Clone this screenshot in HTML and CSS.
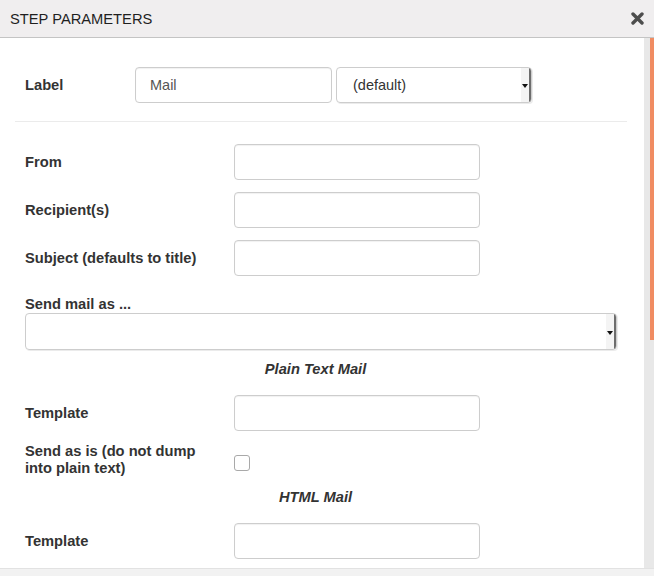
FILE: index.html
```html
<!DOCTYPE html>
<html lang="en">
<head>
<meta charset="utf-8">
<title>Step parameters</title>
<link rel="stylesheet" href="styles.css">
</head>
<body>
<div class="dialog">
  <div class="header">
    <span class="title">STEP PARAMETERS</span>
    <svg class="close" width="13" height="13" viewBox="0 0 13 13"><path d="M2 2 L11 11 M11 2 L2 11" stroke="#4d4d4d" stroke-width="3.4" stroke-linecap="round" fill="none"/></svg>
  </div>
  <div class="body">
    <div class="content">
      <div class="label-row">
        <span class="label-name">Label</span>
        <input class="text label-input" type="text" value="Mail">
        <span class="select-wrap"><select class="select label-select"><option>(default)</option></select></span>
      </div>
      <div class="divider"></div>
      <div class="field">
        <span class="field-label">From</span>
        <input class="text field-input" type="text">
      </div>
      <div class="field">
        <span class="field-label">Recipient(s)</span>
        <input class="text field-input" type="text">
      </div>
      <div class="field">
        <span class="field-label">Subject (defaults to title)</span>
        <input class="text field-input" type="text">
      </div>
      <div class="send-group">
        <div class="stack-label">Send mail as ...</div>
        <span class="select-wrap wide"><select class="select wide-select"><option></option></select></span>
      </div>
      <div class="section-title">Plain Text Mail</div>
      <div class="field">
        <span class="field-label">Template</span>
        <input class="text field-input" type="text">
      </div>
      <div class="field check-row">
        <span class="field-label">Send as is (do not dump into plain text)</span>
        <input class="check" type="checkbox">
      </div>
      <div class="section-title">HTML Mail</div>
      <div class="field">
        <span class="field-label">Template</span>
        <input class="text field-input" type="text">
      </div>
    </div>
    <div class="scrollbar"><div class="thumb"></div></div>
  </div>
  <div class="footer"></div>
</div>
</body>
</html>
```
FILE: styles.css
```css
html, body {
  margin: 0;
  padding: 0;
  background: #fff;
}
body {
  font-family: "Liberation Sans", Arial, sans-serif;
  color: #333;
}
.dialog {
  width: 654px;
  height: 576px;
  display: flex;
  flex-direction: column;
  overflow: hidden;
}
.header {
  height: 37px;
  flex: none;
  background: #f0eeef;
  border-bottom: 1px solid #c4c4c4;
  display: flex;
  align-items: center;
  justify-content: space-between;
  padding: 0 10px 0 10px;
}
.title {
  font-size: 14.7px;
  color: #1f1f1f;
  padding-top: 1px;
}
.close {
  display: block;
}
.body {
  flex: none;
  height: 530px;
  display: flex;
}
.content {
  flex: 1;
  overflow: hidden;
  padding: 29px 17px 0 15px;
}
.scrollbar {
  width: 10px;
  flex: none;
  background: #e8e8e8;
  display: flex;
  justify-content: flex-end;
}
.thumb {
  width: 4px;
  height: 302px;
  background: #f08c62;
}
.footer {
  flex: 1;
  background: #f2f2f2;
  border-top: 1px solid #e2e2e2;
}
.label-row {
  display: flex;
  align-items: center;
  height: 36px;
  padding-left: 10px;
  margin-bottom: 18px;
}
.label-name {
  width: 110px;
  font-weight: bold;
  font-size: 14.7px;
  color: #333;
}
.text {
  box-sizing: border-box;
  height: 36px;
  border: 1px solid #cdcdcd;
  border-radius: 4px;
  background: #fff;
  box-shadow: inset 0 1px 1px rgba(0,0,0,0.06);
  font-family: "Liberation Sans", Arial, sans-serif;
  font-size: 14.5px;
  color: #555;
  padding: 0 14px;
  margin: 0;
  outline: none;
}
.label-input {
  width: 197px;
}
.select-wrap {
  position: relative;
  display: inline-block;
  margin-left: 4px;
}
.select-wrap::after {
  content: "";
  position: absolute;
  right: 4px;
  top: 50%;
  margin-top: -1px;
  border-left: 3px solid transparent;
  border-right: 3px solid transparent;
  border-top: 4px solid #111;
}
.select {
  -webkit-appearance: none;
  appearance: none;
  box-sizing: border-box;
  height: 36px;
  border: 1px solid #cdcdcd;
  border-radius: 4px;
  background: linear-gradient(to left, #6d6d6d 0, #6d6d6d 2px, #f4f4f4 2px, #f4f4f4 10px, #fff 10px);
  box-shadow: 1px 1px 0 rgba(0,0,0,0.08);
  font-family: "Liberation Sans", Arial, sans-serif;
  font-size: 14.5px;
  color: #333;
  padding: 0 16px;
  margin: 0;
  outline: none;
  display: block;
}
.label-select {
  width: 196px;
}
.divider {
  border-top: 1px solid #ebebeb;
  margin-bottom: 22px;
}
.field {
  display: flex;
  align-items: center;
  padding-left: 10px;
  margin-bottom: 12px;
}
.field-label {
  width: 190px;
  margin-right: 19px;
  font-weight: bold;
  font-size: 14.7px;
  line-height: 17px;
  color: #333;
}
.field-input {
  width: 246px;
}
.send-group {
  padding-left: 10px;
  padding-top: 7px;
  margin-bottom: 11px;
}
.stack-label {
  font-weight: bold;
  font-size: 14.7px;
  line-height: 18px;
}
.select-wrap.wide {
  margin-left: 0;
  display: block;
  width: 592px;
}
.wide-select {
  width: 592px;
  height: 37px;
}
.section-title {
  text-align: center;
  font-weight: bold;
  font-style: italic;
  font-size: 14.7px;
  line-height: 17px;
  padding-left: 10px;
  padding-right: 21px;
  margin-bottom: 17px;
}
.check-row {
  align-items: flex-start;
}
.check {
  -webkit-appearance: none;
  appearance: none;
  box-sizing: border-box;
  width: 16px;
  height: 16px;
  margin: 12px 0 0 0;
  border: 1px solid #a9a9a9;
  border-radius: 3px;
  background: #fff;
}
```
